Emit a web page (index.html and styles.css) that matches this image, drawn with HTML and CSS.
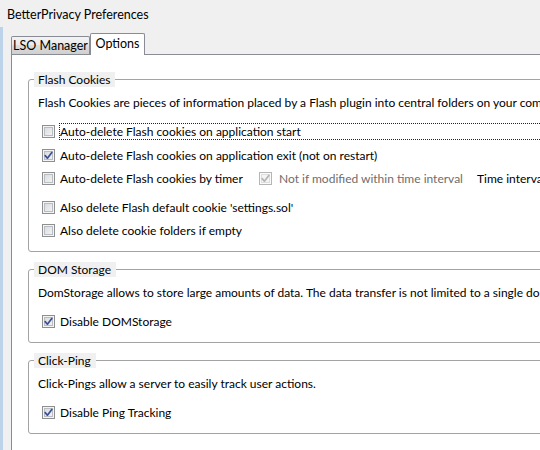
FILE: index.html
```html
<!DOCTYPE html>
<html>
<head>
<meta charset="utf-8">
<link rel="stylesheet" href="styles.css">
</head>
<body>
<div class="window">
  <div class="titlebar">BetterPrivacy Preferences</div>
  <div class="frame">
    <div class="tabs">
      <div class="tab">LSO Manager</div>
      <div class="tab selected">Options</div>
    </div>
    <div class="panel">
      <fieldset class="group">
        <legend>Flash Cookies</legend>
        <p class="desc">Flash Cookies are pieces of information placed by a Flash plugin into central folders on your computer.</p>
        <div class="row">
          <span class="cb"></span><span class="label focus">Auto-delete Flash cookies on application start</span>
        </div>
        <div class="row">
          <span class="cb checked"><svg viewBox="0 0 11 11"><path d="M2.2 5.6 L4.4 8.2 L8.8 2.4"/></svg></span><span class="label">Auto-delete Flash cookies on application exit (not on restart)</span>
        </div>
        <div class="row">
          <span class="opt-main"><span class="cb"></span><span class="label">Auto-delete Flash cookies by timer</span></span>
          <span class="opt-sub"><span class="cb checked disabled"><svg viewBox="0 0 11 11"><path d="M2.2 5.6 L4.4 8.2 L8.8 2.4"/></svg></span><span class="label muted">Not if modified within time interval</span></span>
          <span class="label">Time interval</span>
        </div>
        <div class="row spaced">
          <span class="cb"></span><span class="label">Also delete Flash default cookie 'settings.sol'</span>
        </div>
        <div class="row">
          <span class="cb"></span><span class="label">Also delete cookie folders if empty</span>
        </div>
      </fieldset>

      <fieldset class="group">
        <legend>DOM Storage</legend>
        <p class="desc">DomStorage allows to store large amounts of data. The data transfer is not limited to a single domain.</p>
        <div class="row">
          <span class="cb checked"><svg viewBox="0 0 11 11"><path d="M2.2 5.6 L4.4 8.2 L8.8 2.4"/></svg></span><span class="label">Disable DOMStorage</span>
        </div>
      </fieldset>

      <fieldset class="group">
        <legend>Click-Ping</legend>
        <p class="desc">Click-Pings allow a server to easily track user actions.</p>
        <div class="row">
          <span class="cb checked"><svg viewBox="0 0 11 11"><path d="M2.2 5.6 L4.4 8.2 L8.8 2.4"/></svg></span><span class="label">Disable Ping Tracking</span>
        </div>
      </fieldset>
    </div>
  </div>
</div>
</body>
</html>
```

FILE: styles.css
```css
html, body {
  margin: 0;
  padding: 0;
}
body {
  width: 540px;
  height: 450px;
  overflow: hidden;
  background: #f0f0f0;
  font-family: Lato, "Open Sans", sans-serif;
  font-size: 12px;
  color: #000;
}
.window {
  display: flex;
  flex-direction: column;
  height: 450px;
}
.titlebar {
  height: 27px;
  box-sizing: border-box;
  padding: 2px 0 0 7px;
  line-height: 26px;
  font-size: 12.5px;
  white-space: nowrap;
}
.frame {
  flex: 1;
  border-left: 3px solid #bcd3ea;
  padding-left: 8px;
  display: flex;
  flex-direction: column;
  min-height: 0;
}
.tabs {
  height: 28px;
  display: flex;
  align-items: flex-end;
}
.tab {
  box-sizing: border-box;
  height: 18px;
  margin-bottom: 1px;
  width: 79px;
  border: 1px solid #898c95;
  border-bottom: none;
  border-radius: 2px 2px 0 0;
  background: linear-gradient(#f3f3f3, #ebebeb 45%, #dddddd 50%, #cfcfcf);
  text-align: center;
  line-height: 17px;
  font-size: 12.5px;
  white-space: nowrap;
}
.tab.selected {
  position: relative;
  z-index: 2;
  height: 22px;
  width: 55px;
  margin-bottom: 0;
  background: #fff;
  line-height: 19px;
}
.panel {
  flex: 1;
  width: 800px;
  margin-top: -1px;
  background: #fff;
  border-top: 1px solid #898c95;
  border-left: 1px solid #898c95;
  padding: 17px 0 0 16px;
  box-sizing: border-box;
}
.group {
  margin: 0 0 10px 0;
  padding: 8px 0 12px 9px;
  border: 1px solid #a3a3a3;
  border-radius: 3px;
  min-width: 0;
}
.group legend {
  margin-left: -4px;
  padding: 0 5px 0 4px;
  background: #f0f0f0;
  line-height: 15px;
  height: 15px;
}
.desc {
  margin: 0 0 12px 0;
  line-height: 16px;
  white-space: nowrap;
}
.row {
  display: flex;
  align-items: center;
  height: 17px;
  margin-top: 6.5px;
  padding-left: 4px;
  white-space: nowrap;
}
.desc + .row {
  margin-top: 0;
}
.row.spaced {
  margin-top: 11.5px;
}
.opt-main {
  display: flex;
  align-items: center;
  width: 217px;
}
.opt-sub {
  display: flex;
  align-items: center;
  width: 213px;
}
.cb {
  flex: none;
  width: 13px;
  height: 13px;
  box-sizing: border-box;
  border: 1px solid #8e8f8f;
  background: linear-gradient(135deg, #d3d6db, #f8f8f8);
  box-shadow: inset 0 0 0 1px #f4f4f4, inset 0 0 0 2px #b9bcc1;
  display: flex;
  align-items: center;
  justify-content: center;
}
.cb svg {
  width: 11px;
  height: 11px;
  fill: none;
  stroke: #3b4f98;
  stroke-width: 1.7;
  stroke-linecap: round;
  stroke-linejoin: round;
}
.cb.disabled {
  border-color: #b5b5b5;
  background: #f4f4f4;
  box-shadow: inset 0 0 0 1px #fafafa, inset 0 0 0 2px #dedede;
}
.cb.disabled svg {
  stroke: #b3b3b3;
}
.label {
  margin-left: 4px;
  border: 1px solid transparent;
  line-height: 15px;
}
.label.focus {
  flex: 1;
  border: 1px dotted #222;
}
.label.muted {
  color: #6d6d6d;
  margin-left: 6px;
}
```
